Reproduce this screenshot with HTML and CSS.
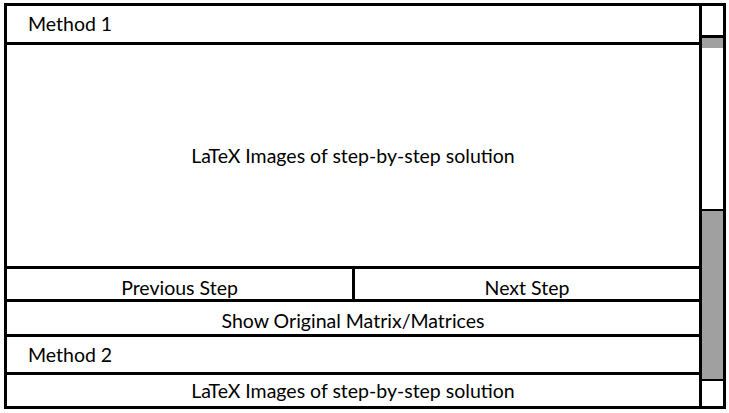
FILE: index.html
```html
<!DOCTYPE html>
<html>
<head>
<meta charset="utf-8">
<link rel="stylesheet" href="styles.css">
</head>
<body>
<div class="frame">
  <div class="main">
    <div class="row head h1">Method 1</div>
    <div class="row center big">LaTeX Images of step-by-step solution</div>
    <div class="row buttons">
      <div class="btn prev">Previous Step</div>
      <div class="btn next">Next Step</div>
    </div>
    <div class="row center show">Show Original Matrix/Matrices</div>
    <div class="row head h2">Method 2</div>
    <div class="row center small">LaTeX Images of step-by-step solution</div>
  </div>
  <div class="scroll">
    <div class="sb-top"></div>
    <div class="sb-cap"></div>
    <div class="sb-track"></div>
    <div class="sb-thumb"></div>
    <div class="sb-bottom"></div>
  </div>
</div>
</body>
</html>
```
FILE: styles.css
```css
html, body {
  margin: 0;
  padding: 0;
  background: #fff;
}
body {
  font-family: Lato, "Open Sans", sans-serif;
  font-size: 19.5px;
  line-height: 1;
  color: #000;
}
.frame {
  box-sizing: border-box;
  margin: 3px 0 0 4px;
  width: 722px;
  height: 406px;
  border: 3px solid #000;
  display: flex;
}
.main {
  width: 692px;
  border-right: 3px solid #000;
  display: flex;
  flex-direction: column;
}
.row {
  box-sizing: content-box;
  display: flex;
  align-items: center;
  border-top: 3px solid #000;
}
.row.h1 { border-top: none; height: 36px; }
.head { padding-left: 21px; }
.center { justify-content: center; }
.big { height: 221px; }
.buttons { height: 30px; }
.show { height: 26px; padding-top: 6px; }
.h2 { height: 35px; }
.small { height: 31px; }
.btn {
  height: 100%;
  display: flex;
  align-items: center;
  justify-content: center;
  padding-top: 8px;
  box-sizing: border-box;
}
.prev { width: 348px; border-right: 3px solid #000; }
.next { flex: 1; }
.scroll {
  width: 21px;
  display: flex;
  flex-direction: column;
}
.sb-top { height: 29px; border-bottom: 3px solid #000; }
.sb-cap { height: 10px; background: #a0a0a0; }
.sb-track { height: 161px; border-bottom: 2px solid #000; }
.sb-thumb { height: 168px; background: #a0a0a0; border-bottom: 2px solid #000; }
.sb-bottom { height: 25px; }
```
